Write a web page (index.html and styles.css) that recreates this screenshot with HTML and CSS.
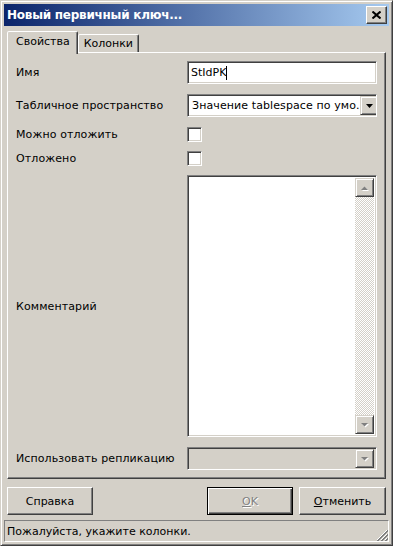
FILE: index.html
```html
<!DOCTYPE html>
<html lang="ru">
<head>
    <meta charset="UTF-8">
    <meta name="viewport" content="width=device-width, initial-scale=1.0">
    <title>Новый первичный ключ</title>
    <link rel="stylesheet" href="styles.css">
</head>
<body>
    <div class="window">
        <div class="titlebar">
            <span class="title">Новый первичный ключ...</span>
            <button class="close-btn" aria-label="Закрыть">
                <svg width="9" height="8" viewBox="0 0 9 8">
                    <path d="M0.5 0.5 L8.5 7.5 M8.5 0.5 L0.5 7.5" stroke="#000" stroke-width="2" fill="none"/>
                </svg>
            </button>
        </div>

        <div class="tabs">
            <div class="tab active">Свойства</div>
            <div class="tab">Колонки</div>
        </div>

        <div class="panel">
            <label class="field-label">Имя</label>
            <div class="textbox">StIdPK<span class="caret"></span></div>

            <label class="field-label">Табличное пространство</label>
            <div class="combo">
                <span class="combo-text">Значение tablespace по умо.</span>
                <span class="combo-btn">
                    <svg width="7" height="4" viewBox="0 0 7 4"><polygon points="0,0 7,0 3.5,4" fill="#000"/></svg>
                </span>
            </div>

            <label class="field-label">Можно отложить</label>
            <div class="checkbox"></div>

            <label class="field-label">Отложено</label>
            <div class="checkbox"></div>

            <label class="field-label">Комментарий</label>
            <div class="memo">
                <div class="memo-body"></div>
                <div class="scrollbar">
                    <span class="scroll-btn">
                        <svg width="9" height="6" viewBox="0 0 9 6">
                            <polygon points="1,5 8,5 4.5,1.5" fill="#fff" transform="translate(1,1)"/>
                            <polygon points="1,5 8,5 4.5,1.5" fill="#808080"/>
                        </svg>
                    </span>
                    <span class="scroll-track"></span>
                    <span class="scroll-btn">
                        <svg width="9" height="6" viewBox="0 0 9 6">
                            <polygon points="1,1 8,1 4.5,4.5" fill="#fff" transform="translate(1,1)"/>
                            <polygon points="1,1 8,1 4.5,4.5" fill="#808080"/>
                        </svg>
                    </span>
                </div>
            </div>

            <label class="field-label">Использовать репликацию</label>
            <div class="combo disabled">
                <span class="combo-text"></span>
                <span class="combo-btn">
                    <svg width="9" height="6" viewBox="0 0 9 6">
                        <polygon points="1,1 8,1 4.5,4.5" fill="#fff" transform="translate(1,1)"/>
                        <polygon points="1,1 8,1 4.5,4.5" fill="#808080"/>
                    </svg>
                </span>
            </div>
        </div>

        <div class="buttons">
            <button class="btn">Справка</button>
            <div class="buttons-right">
                <button class="btn default" disabled><u>O</u>K</button>
                <button class="btn"><u>О</u>тменить</button>
            </div>
        </div>

        <div class="statusbar">
            <span>Пожалуйста, укажите колонки.</span>
            <svg class="grip" width="12" height="12" viewBox="0 0 12 12">
                <path d="M11 1 L1 11 M11 5 L5 11 M11 9 L9 11" stroke="#fff" stroke-width="1"/>
                <path d="M12 1 L1 12 M12 2 L2 12 M12 5 L5 12 M12 6 L6 12 M12 9 L9 12 M12 10 L10 12" stroke="#808080" stroke-width="1"/>
            </svg>
        </div>
    </div>
</body>
</html>
```

FILE: styles.css
```css
body {
    margin: 0;
    padding: 0;
    font-family: "DejaVu Sans", Verdana, sans-serif;
    font-size: 11px;
    color: #000000;
    background-color: #d4d0c8;
}
.window {
    width: 393px;
    height: 546px;
    box-sizing: border-box;
    background: #d4d0c8;
    border: 1px solid;
    border-color: #d4d0c8 #404040 #404040 #d4d0c8;
    box-shadow: inset 1px 1px #ffffff, inset -1px -1px #808080;
    padding: 3px;
    display: flex;
    flex-direction: column;
}
.titlebar {
    height: 22px;
    flex: none;
    display: flex;
    align-items: center;
    justify-content: space-between;
    padding: 0 2px 0 3px;
    background: linear-gradient(to right, #0a246a, #a6caf0);
}
.title {
    color: #ffffff;
    font-weight: bold;
    font-size: 12px;
    letter-spacing: -0.25px;
}
.close-btn {
    width: 21px;
    height: 18px;
    padding: 0;
    display: flex;
    align-items: center;
    justify-content: center;
    background: #d4d0c8;
    border: 1px solid;
    border-color: #ffffff #404040 #404040 #ffffff;
    box-shadow: inset -1px -1px #808080;
}
.tabs {
    display: flex;
    align-items: flex-end;
    height: 21px;
    margin: 5px 3px 0;
    flex: none;
}
.tab {
    height: 18px;
    box-sizing: border-box;
    padding: 2px 5px 0 5px;
    border: 1px solid;
    border-bottom: none;
    border-color: #ffffff #404040 transparent #ffffff;
    box-shadow: inset -1px 0 #808080;
    border-radius: 2px 2px 0 0;
    background: #d4d0c8;
}
.tab.active {
    height: 23px;
    padding: 3px 7px 0 8px;
    margin-bottom: -2px;
    position: relative;
    z-index: 1;
}
.panel {
    flex: 1;
    margin: 0 3px;
    border: 1px solid;
    border-color: #ffffff #404040 #404040 #ffffff;
    box-shadow: inset -1px -1px #808080;
    padding: 8px 8px 8px 8px;
    display: grid;
    grid-template-columns: 1fr 190px;
    grid-template-rows: 23px 23px 14px 14px 1fr 23px;
    row-gap: 10px;
    min-height: 0;
}
.field-label {
    align-self: center;
    letter-spacing: 0.1px;
}
.textbox,
.combo,
.memo,
.checkbox {
    box-sizing: border-box;
    border: 1px solid;
    border-color: #808080 #ffffff #ffffff #808080;
    box-shadow: inset 1px 1px #404040, inset -1px -1px #d4d0c8;
    background: #ffffff;
}
.textbox {
    display: flex;
    align-items: center;
    padding-left: 3px;
}
.caret {
    display: inline-block;
    width: 1px;
    height: 14px;
    background: #000000;
}
.combo {
    display: flex;
    align-items: center;
    padding: 2px;
    overflow: hidden;
}
.combo-text {
    flex: 1;
    padding-left: 2px;
    white-space: nowrap;
    letter-spacing: 0.1px;
}
.combo.disabled {
    background: #d4d0c8;
}
.combo-btn,
.scroll-btn {
    flex: none;
    width: 19px;
    height: 19px;
    box-sizing: border-box;
    display: flex;
    align-items: center;
    justify-content: center;
    background: #d4d0c8;
    border: 1px solid;
    border-color: #d4d0c8 #404040 #404040 #d4d0c8;
    box-shadow: inset 1px 1px #ffffff, inset -1px -1px #808080;
}
.checkbox {
    width: 15px;
    height: 15px;
}
.memo {
    display: flex;
    padding: 2px;
}
.memo-body {
    flex: 1;
}
.scrollbar {
    width: 19px;
    display: flex;
    flex-direction: column;
}
.scroll-track {
    flex: 1;
    background: repeating-conic-gradient(#d4d0c8 0 25%, #ffffff 0 50%) 0 0 / 2px 2px;
}
.buttons {
    flex: none;
    display: flex;
    justify-content: space-between;
    margin: 8px 3px 0;
}
.buttons-right {
    display: flex;
    gap: 6px;
}
.btn {
    width: 86px;
    height: 28px;
    padding: 0;
    font-family: inherit;
    font-size: 11px;
    color: #000000;
    background: #d4d0c8;
    border: 1px solid;
    border-color: #ffffff #404040 #404040 #ffffff;
    box-shadow: inset -1px -1px #808080;
}
.btn.default {
    border-color: #000000;
    box-shadow: inset 1px 1px #ffffff, inset -1px -1px #404040, inset -2px -2px #808080;
    color: #808080;
    text-shadow: 1px 1px #ffffff;
}
.buttons-right .btn:last-child {
    width: 87px;
}
.statusbar {
    flex: none;
    height: 22px;
    margin-top: 5px;
    box-sizing: border-box;
    display: flex;
    align-items: center;
    justify-content: space-between;
    padding-left: 2px;
    border: 1px solid;
    border-color: #808080 #ffffff #ffffff #808080;
}
.grip {
    align-self: flex-end;
}
```
